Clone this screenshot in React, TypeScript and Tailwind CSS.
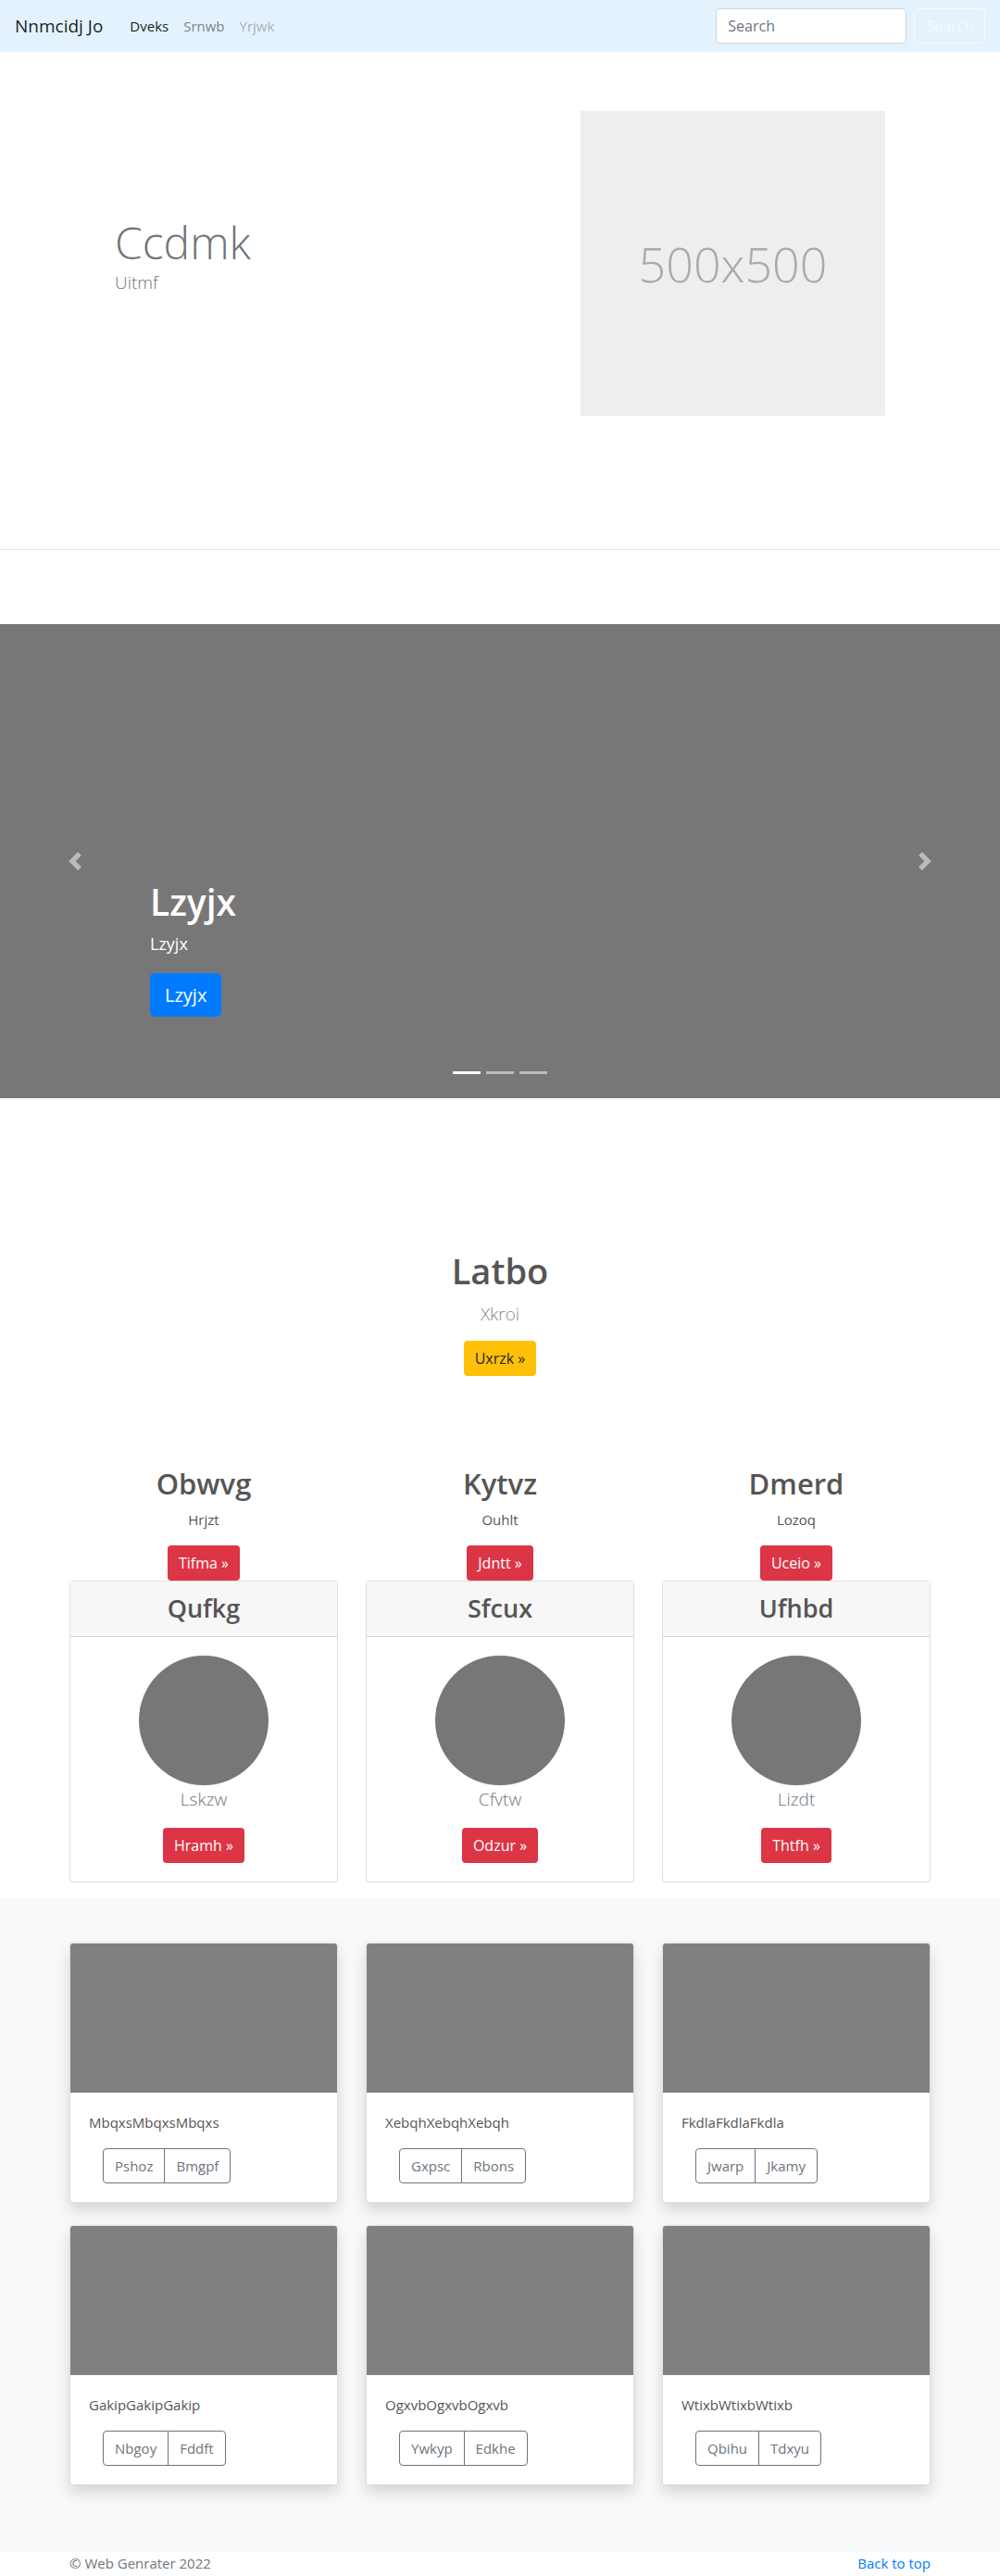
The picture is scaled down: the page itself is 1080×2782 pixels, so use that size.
import React from "react";

const FONT = "font-['Open_Sans',sans-serif]";

const columns = [
  { title: "Obwvg", text: "Hrjzt", btn: "Tifma", card: "Qufkg", caption: "Lskzw", cardBtn: "Hramh" },
  { title: "Kytvz", text: "Ouhlt", btn: "Jdntt", card: "Sfcux", caption: "Cfvtw", cardBtn: "Odzur" },
  { title: "Dmerd", text: "Lozoq", btn: "Uceio", card: "Ufhbd", caption: "Lizdt", cardBtn: "Thtfh" },
];

const albums = [
  { text: "MbqxsMbqxsMbqxs", a: "Pshoz", b: "Bmgpf" },
  { text: "XebqhXebqhXebqh", a: "Gxpsc", b: "Rbons" },
  { text: "FkdlaFkdlaFkdla", a: "Jwarp", b: "Jkamy" },
  { text: "GakipGakipGakip", a: "Nbgoy", b: "Fddft" },
  { text: "OgxvbOgxvbOgxvb", a: "Ywkyp", b: "Edkhe" },
  { text: "WtixbWtixbWtixb", a: "Qbihu", b: "Tdxyu" },
];

function RedButton({ label }: { label: string }) {
  return (
    <button className="inline-flex h-[38px] items-center rounded-[4px] bg-[#dc3545] px-3 text-[16px] text-white">
      {label} »
    </button>
  );
}

function Navbar() {
  return (
    <nav className="flex h-14 items-center bg-[#e3f2fd] px-4">
      <a href="#" className="mr-[21px] text-[19px] text-black/90">
        Nnmcidj Jo
      </a>
      <div className="flex text-[15px]">
        <a href="#" className="px-2 text-black/90">Dveks</a>
        <a href="#" className="px-2 text-black/50">Srnwb</a>
        <span className="px-2 text-black/30">Yrjwk</span>
      </div>
      <form className="ml-auto flex items-center">
        <input
          placeholder="Search"
          className="h-[38px] w-[206px] rounded-[4px] border border-[#ced4da] bg-white px-3 text-[16px] placeholder:text-[#6c757d]"
        />
        <button type="button" className="ml-2 h-[38px] rounded-[4px] border border-[#f8f9fa] px-3 text-[16px] text-[#f8f9fa]">
          Search
        </button>
      </form>
    </nav>
  );
}

function Hero() {
  return (
    <section className="flex items-center justify-between px-[124px] py-16">
      <div>
        <h1 className="text-[48px] font-light leading-[1.2] text-[#6c757d]">Ccdmk</h1>
        <p className="mb-4 text-[19px] font-light leading-[30px] text-[#6c757d]">Uitmf</p>
      </div>
      <div className="flex h-[329px] w-[329px] items-center justify-center bg-[#eeeeee] text-[52px] font-light text-[#aaaaaa]">
        500x500
      </div>
    </section>
  );
}

function Carousel() {
  return (
    <div className="relative h-[512px] bg-[#777777]">
      <div className="absolute inset-y-0 left-0 flex w-[15%] items-center justify-center opacity-50">
        <svg width="20" height="20" viewBox="0 0 8 8" fill="#fff">
          <path d="M5.25 0l-4 4 4 4 1.5-1.5L4.25 4l2.5-2.5L5.25 0z" />
        </svg>
      </div>
      <div className="absolute inset-y-0 right-0 flex w-[15%] items-center justify-center opacity-50">
        <svg width="20" height="20" viewBox="0 0 8 8" fill="#fff">
          <path d="M2.75 0l-1.5 1.5L3.75 4l-2.5 2.5L2.75 8l4-4-4-4z" />
        </svg>
      </div>
      <div className="absolute left-[15%] top-[276px] text-white">
        <h1 className="mb-2 text-[39px] font-semibold leading-[48px]">Lzyjx</h1>
        <p className="mb-[18px] text-[18px] leading-[27px]">Lzyjx</p>
        <button className="h-[47px] rounded-[5px] bg-[#007bff] px-4 text-[20px] text-white">Lzyjx</button>
      </div>
      <div className="absolute inset-x-0 bottom-4 flex justify-center">
        <span className="mx-[3px] my-[10px] h-[3px] w-[30px] bg-white" />
        <span className="mx-[3px] my-[10px] h-[3px] w-[30px] bg-white/50" />
        <span className="mx-[3px] my-[10px] h-[3px] w-[30px] bg-white/50" />
      </div>
    </div>
  );
}

function Marketing() {
  return (
    <section>
      <div className="pt-[162px] text-center">
        <h2 className="mb-2 text-[38px] font-semibold leading-[48px] text-[#555555]">Latbo</h2>
        <p className="mb-[14px] text-[19px] font-light leading-[30px] text-[#888888]">Xkroi</p>
        <button className="h-[38px] rounded-[4px] bg-[#ffc107] px-3 text-[16px] text-[#212529]">Uxrzk »</button>
      </div>

      <div className="mx-auto mt-[97px] grid w-[960px] grid-cols-3">
        {columns.map((c) => (
          <div key={c.title} className="px-[15px] text-center">
            <h2 className="mb-2 text-[31px] font-semibold leading-[38px] text-[#555555]">{c.title}</h2>
            <p className="mb-4 text-[15px] leading-6 text-[#555555]">{c.text}</p>
            <RedButton label={c.btn} />
            <div className="rounded-[4px] border border-black/[0.125]">
              <div className="flex h-[60px] items-center justify-center border-b border-black/[0.125] bg-[#f7f7f7]">
                <h3 className="text-[27px] font-semibold text-[#555555]">{c.card}</h3>
              </div>
              <div className="flex flex-col items-center py-5">
                <div className="h-[140px] w-[140px] rounded-full bg-[#777777]" />
                <p className="mb-4 text-[19px] font-light leading-[30px] text-[#6c757d]">{c.caption}</p>
                <RedButton label={c.cardBtn} />
              </div>
            </div>
          </div>
        ))}
      </div>
    </section>
  );
}

function Album() {
  return (
    <section className="mt-[17px] bg-[#f8f9fa] py-12">
      <div className="mx-auto grid w-[960px] grid-cols-3">
        {albums.map((a) => (
          <div key={a.text} className="mb-6 px-[15px]">
            <div className="rounded-[4px] border border-black/[0.125] bg-white shadow-[0_8px_16px_rgba(0,0,0,0.15)]">
              <div className="h-[161px] rounded-t-[3px] bg-[#808080]" />
              <div className="p-5">
                <p className="mb-4 text-[15px] leading-6 text-[#555555]">{a.text}</p>
                <div className="ml-[15px] inline-flex">
                  <button className="h-[38px] rounded-l-[4px] border border-[#6c757d] px-3 text-[15px] text-[#6c757d]">
                    {a.a}
                  </button>
                  <button className="-ml-px h-[38px] rounded-r-[4px] border border-[#6c757d] px-3 text-[15px] text-[#6c757d]">
                    {a.b}
                  </button>
                </div>
              </div>
            </div>
          </div>
        ))}
      </div>
    </section>
  );
}

export default function App() {
  return (
    <div className={`${FONT} bg-white`}>
      <Navbar />
      <Hero />
      <hr className="my-20 border-t border-black/10" />
      <Carousel />
      <Marketing />
      <Album />
      <footer className="mx-auto flex w-[930px] justify-between text-[15px] leading-6">
        <p className="text-[#6c757d]">© Web Genrater 2022</p>
        <a href="#" className="text-[#007bff]">Back to top</a>
      </footer>
    </div>
  );
}
